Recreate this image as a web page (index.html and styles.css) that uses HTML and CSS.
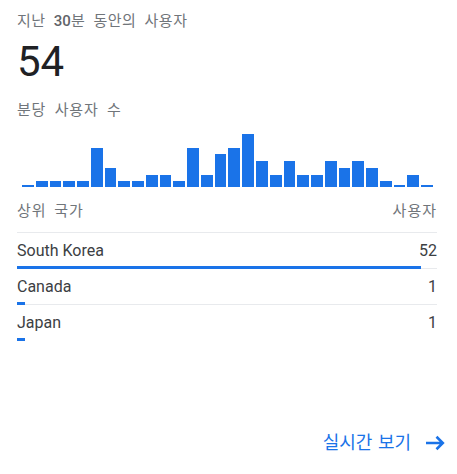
FILE: index.html
```html
<!DOCTYPE html>
<html lang="ko">
<head>
<meta charset="utf-8">
<link rel="stylesheet" href="styles.css">
</head>
<body>
<div class="card">
  <div class="title">지난 <span class="num">30</span>분 동안의 사용자</div>
  <div class="big">54</div>
  <div class="sub">분당 사용자 수</div>
  <div class="chart">
    <div class="col" style="height:2px"></div>
    <div class="col" style="height:6px"></div>
    <div class="col" style="height:6px"></div>
    <div class="col" style="height:6px"></div>
    <div class="col" style="height:6px"></div>
    <div class="col" style="height:39px"></div>
    <div class="col" style="height:19px"></div>
    <div class="col" style="height:6px"></div>
    <div class="col" style="height:6px"></div>
    <div class="col" style="height:12px"></div>
    <div class="col" style="height:12px"></div>
    <div class="col" style="height:6px"></div>
    <div class="col" style="height:39px"></div>
    <div class="col" style="height:12px"></div>
    <div class="col" style="height:33px"></div>
    <div class="col" style="height:39px"></div>
    <div class="col" style="height:53px"></div>
    <div class="col" style="height:26px"></div>
    <div class="col" style="height:12px"></div>
    <div class="col" style="height:26px"></div>
    <div class="col" style="height:12px"></div>
    <div class="col" style="height:12px"></div>
    <div class="col" style="height:26px"></div>
    <div class="col" style="height:19px"></div>
    <div class="col" style="height:26px"></div>
    <div class="col" style="height:19px"></div>
    <div class="col" style="height:6px"></div>
    <div class="col" style="height:2px"></div>
    <div class="col" style="height:12px"></div>
    <div class="col" style="height:2px"></div>
  </div>
  <div class="table">
    <div class="thead"><span>상위 국가</span><span>사용자</span></div>
    <div class="row">
      <div class="line"><span>South Korea</span><span>52</span></div>
      <div class="bar" style="width:96.2%"></div>
    </div>
    <div class="row">
      <div class="line"><span>Canada</span><span>1</span></div>
      <div class="bar" style="width:1.9%"></div>
    </div>
    <div class="row last">
      <div class="line"><span>Japan</span><span>1</span></div>
      <div class="bar" style="width:1.9%"></div>
    </div>
  </div>
  <div class="footer">
    <a class="link" href="#">실시간 보기
      <svg class="arrow" width="20" height="16" viewBox="0 0 20 16" aria-hidden="true"><path d="M1 8H17.5M11.5 1.8L17.8 8L11.5 14.2" fill="none" stroke="#1a73e8" stroke-width="2.6"/></svg>
    </a>
  </div>
</div>
</body>
</html>
```

FILE: styles.css
```css
html, body {
  margin: 0;
  padding: 0;
  background: #fff;
}
body {
  font-family: Roboto, "Noto Sans CJK KR", sans-serif;
  color: #3c4043;
}
.card {
  height: 474px;
  box-sizing: border-box;
  padding: 12px 20px 0 17px;
  display: flex;
  flex-direction: column;
}
.title {
  font-size: 15px;
  line-height: 18px;
  color: #70757a;
  word-spacing: 4px;
  letter-spacing: 0.5px;
}
.title .num {
  color: #5f6368;
  font-weight: 500;
  letter-spacing: 0;
}
.big {
  margin-top: 8px;
  font-size: 42px;
  line-height: 48px;
  color: #202124;
  font-weight: 400;
}
.sub {
  margin-top: 15px;
  font-size: 15px;
  line-height: 18px;
  color: #70757a;
  word-spacing: 4px;
  letter-spacing: 0.8px;
}
.chart {
  margin: 10px 4px 0 5px;
  height: 58px;
  display: flex;
  align-items: flex-end;
  gap: 2px;
}
.col {
  flex: 1;
  background: #1a73e8;
}
.table {
  margin-top: 14px;
}
.thead {
  display: flex;
  justify-content: space-between;
  font-size: 15px;
  line-height: 20px;
  color: #70757a;
  padding-bottom: 11px;
  border-bottom: 1px solid #e8eaed;
  word-spacing: 3px;
  letter-spacing: 1px;
}
.row {
  padding-top: 2px;
  border-bottom: 1px solid #e8eaed;
}
.row.last {
  border-bottom-color: transparent;
}
.line {
  display: flex;
  justify-content: space-between;
  font-size: 16px;
  line-height: 31px;
  font-weight: 400;
  color: #3c4043;
}
.bar {
  height: 3px;
  background: #1a73e8;
  margin-bottom: -1px;
  position: relative;
}
.footer {
  margin-top: auto;
  margin-right: -8px;
  padding-bottom: 20px;
  display: flex;
  justify-content: flex-end;
}
.link {
  display: flex;
  align-items: center;
  gap: 14px;
  font-size: 18px;
  line-height: 22px;
  color: #1a73e8;
  text-decoration: none;
  word-spacing: 1px;
}
.arrow {
  display: block;
}
```
